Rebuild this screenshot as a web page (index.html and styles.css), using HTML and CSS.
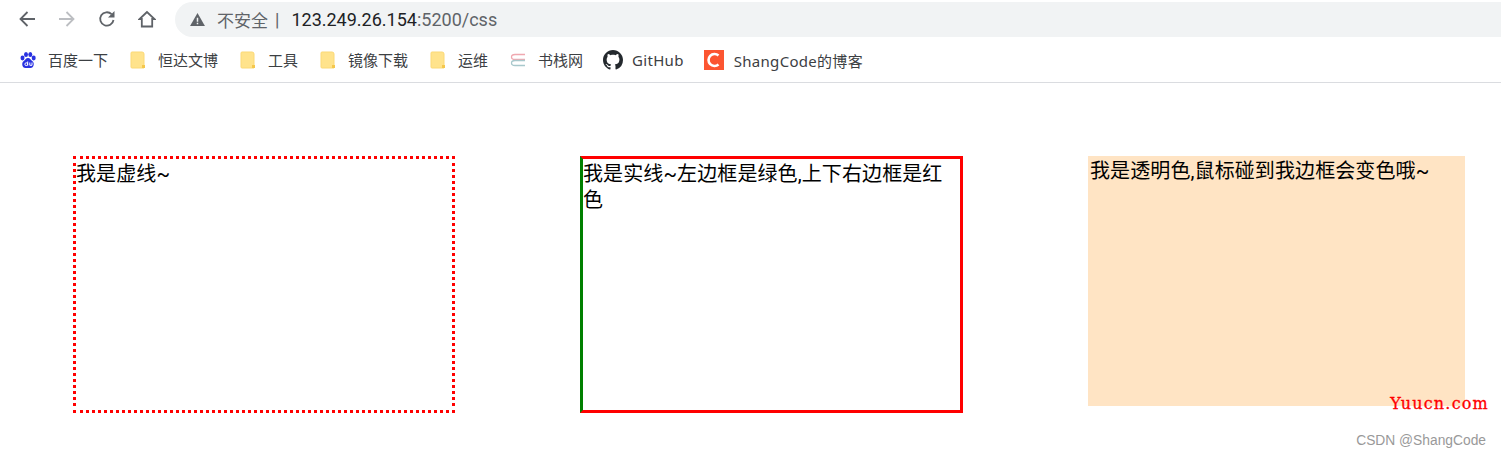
FILE: index.html
```html
<!DOCTYPE html>
<html lang="zh-CN">
<head>
<meta charset="UTF-8" />
<title>css</title>
<link rel="stylesheet" href="styles.css">
</head>
<body>

<header class="chrome">
  <div class="toolbar">
    <svg class="nav-icon" viewBox="0 0 18 18"><path d="M17 9H2.500M9.500 2L2.500 9l7 7" fill="none" stroke="#5f6368" stroke-width="1.800"/></svg>
    <svg class="nav-icon" viewBox="0 0 18 18"><path d="M1 9h14.500M8.500 2l7 7-7 7" fill="none" stroke="#bcbec2" stroke-width="1.800"/></svg>
    <svg class="nav-icon" viewBox="0 0 18 18"><path d="M15.500 10A6.700 6.700 0 1 1 13.600 4.200" fill="none" stroke="#5f6368" stroke-width="1.800"/><path d="M16.500 1v6.500H10z" fill="#5f6368"/></svg>
    <svg class="nav-icon" viewBox="0 0 18 18"><path d="M9 2L1.500 9h2.300v7.500h10.400V9h2.300z" fill="none" stroke="#5f6368" stroke-width="1.800"/></svg>
    <div class="omnibox">
      <svg class="warn" viewBox="0 0 16 14"><path d="M8 0L16 14H0z" fill="#5f6368"/><path d="M7.200 5h1.600v4.500H7.200zM7.200 10.500h1.600V12H7.200z" fill="#f1f3f4"/></svg>
      <span class="insecure">不安全</span>
      <span class="sep">|</span>
      <span class="host">123.249.26.154</span><span class="path">:5200/css</span>
    </div>
  </div>
  <nav class="bookmarks">
    <a class="bookmark">
      <svg class="bm-icon" viewBox="0 0 16 18"><g fill="#2932e1"><ellipse cx="2.500" cy="7" rx="2" ry="2.400"/><ellipse cx="6" cy="3.500" rx="2" ry="2.500"/><ellipse cx="10.300" cy="3.500" rx="2" ry="2.500"/><ellipse cx="13.700" cy="7" rx="2" ry="2.400"/><path d="M8 7c2.200 0 2.800 2.200 4.500 3.300 2.200 1.700 1.500 6.700-2 6.700h-5c-3.500 0-4.200-5-2-6.700C5.200 9.200 5.800 7 8 7z"/></g><circle cx="6.300" cy="13.200" r="1.400" fill="none" stroke="#fff"/><path d="M7.700 10.500v4M9.800 11.500v2.800h2.200v-2.800" fill="none" stroke="#fff"/></svg>
      <span>百度一下</span>
    </a>
    <a class="bookmark">
      <svg class="bm-icon" viewBox="0 0 16 18"><use href="#page"/></svg>
      <span>恒达文博</span>
    </a>
    <a class="bookmark">
      <svg class="bm-icon" viewBox="0 0 16 18"><use href="#page"/></svg>
      <span>工具</span>
    </a>
    <a class="bookmark">
      <svg class="bm-icon" viewBox="0 0 16 18"><use href="#page"/></svg>
      <span>镜像下载</span>
    </a>
    <a class="bookmark">
      <svg class="bm-icon" viewBox="0 0 16 18"><use href="#page"/></svg>
      <span>运维</span>
    </a>
    <a class="bookmark">
      <svg class="bm-icon" viewBox="0 0 16 18"><path d="M15 3.500H5Q1.500 3.500 1.500 6T5 8.500h10" fill="none" stroke="#f0a8b0" stroke-width="1.300"/><path d="M15 9.500H5Q1.500 9.500 1.500 12T5 14.500h10" fill="none" stroke="#a8c8cc" stroke-width="1.300"/></svg>
      <span>书栈网</span>
    </a>
    <a class="bookmark bookmark-tight">
      <svg class="bm-icon bm-github" viewBox="0 0 16 16"><path fill="#24292e" d="M8 0C3.580 0 0 3.580 0 8c0 3.540 2.290 6.530 5.470 7.590.4.070.55-.17.55-.38 0-.19-.01-.82-.01-1.490-2.010.37-2.530-.49-2.690-.94-.09-.23-.48-.94-.82-1.130-.28-.15-.68-.52-.01-.53.63-.01 1.080.58 1.230.82.720 1.210 1.870.87 2.330.66.070-.52.280-.87.510-1.070-1.780-.2-3.640-.89-3.640-3.950 0-.87.310-1.590.820-2.150-.08-.2-.36-1.020.08-2.120 0 0 .67-.21 2.200.82.640-.18 1.320-.27 2-.27s1.360.09 2 .27c1.530-1.040 2.200-.82 2.200-.82.440 1.100.16 1.920.08 2.120.51.560.82 1.270.82 2.150 0 3.070-1.870 3.750-3.650 3.950.29.250.54.730.54 1.480 0 1.070-.01 1.930-.01 2.200 0 .21.150.46.550.38A8.010 8.010 0 0 0 16 8c0-4.420-3.580-8-8-8z"/></svg>
      <span>GitHub</span>
    </a>
    <a class="bookmark bookmark-tight">
      <svg class="bm-icon bm-csdn" viewBox="0 0 20 20"><rect width="20" height="20" fill="#fc5531"/><path d="M14.500 5.500A6 6 0 1 0 14.500 14.500" fill="none" stroke="#fff" stroke-width="2.600"/></svg>
      <span>ShangCode的博客</span>
    </a>
  </nav>
</header>

<svg class="defs" width="0" height="0">
  <symbol id="page" viewBox="0 0 16 18">
    <path d="M2 1h10a2 2 0 0 1 2 2v14H2a1 1 0 0 1-1-1V2a1 1 0 0 1 1-1z" fill="#ffe38c" stroke="#fbd976"/>
    <path d="M12 17v-3h3v3z" fill="#f5c84c"/>
  </symbol>
</svg>

<main class="page">
  <div class="box box-dotted">我是虚线~</div>
  <div class="box box-solid">我是实线~左边框是绿色,上下右边框是红色</div>
  <div class="box box-hover">我是透明色,鼠标碰到我边框会变色哦~</div>
</main>

<div class="mark-yuucn">Yuucn.com</div>
<div class="mark-csdn">CSDN @ShangCode</div>

</body>
</html>
```

FILE: styles.css
```css
html, body {
  margin: 0;
  height: 458px;
  overflow: hidden;
}
body {
  position: relative;
  background: #fff;
  font-family: "Liberation Sans", "Noto Sans CJK SC", sans-serif;
}
.defs {
  position: absolute;
}

/* browser chrome */
.chrome {
  height: 82px;
  border-bottom: 1px solid #dadce0;
  color: #3c4043;
}
.toolbar {
  display: flex;
  align-items: center;
  height: 41px;
  padding: 0 0 3px 18px;
  box-sizing: border-box;
}
.nav-icon {
  width: 18px;
  height: 18px;
  margin-right: 22px;
}
.omnibox {
  display: flex;
  align-items: center;
  flex: 1;
  height: 35px;
  margin-left: -3px;
  padding-left: 15px;
  background: #f1f3f4;
  border-radius: 18px 0 0 18px;
  font-family: "Roboto", "Noto Sans CJK SC", sans-serif;
  font-size: 18px;
}
.warn {
  width: 15px;
  height: 13px;
  margin-right: 12px;
}
.insecure {
  color: #5f6368;
  font-size: 17px;
}
.sep {
  margin: 0 12px 0 7px;
  color: #5f6368;
}
.host {
  color: #202124;
}
.path {
  color: #5f6368;
}

.bookmarks {
  display: flex;
  align-items: center;
  height: 41px;
  padding: 0 0 3px 20px;
  box-sizing: border-box;
  font-size: 15px;
  font-family: "Noto Sans", "Noto Sans CJK SC", sans-serif;
}
.bookmark {
  display: flex;
  align-items: center;
  margin-right: 22px;
}
.bookmark span {
  margin-bottom: 2px;
}
.bookmark-tight {
  margin-left: -2px;
}
.bookmark-tight span {
  margin-bottom: 0;
  letter-spacing: 0.300px;
}
.bm-icon {
  width: 16px;
  height: 18px;
  margin-right: 12px;
}
.bm-github,
.bm-csdn {
  width: 20px;
  height: 20px;
  margin-right: 9px;
}
.bm-csdn {
  margin-right: 10px;
}

/* boxes */
.page {
  display: flex;
  align-items: flex-start;
  padding: 73px 36px 0 73px;
  gap: 124px;
  font-family: "Roboto", "Noto Sans CJK SC", sans-serif;
  font-size: 20px;
  line-height: 26px;
  letter-spacing: 0.100px;
  color: #000;
}
.box {
  width: 377px;
  height: 249px;
  padding-top: 2px;
  flex: none;
}
.box-dotted {
  width: 376px;
  border: 3px dotted #f00;
}
.box-solid {
  margin-left: 1px;
  border: 3px solid #f00;
  border-left-color: #008000;
}
.box-hover {
  background: #ffe4c4;
  margin-left: 1px;
  padding-left: 2px;
  width: 375px;
  height: 248px;
}

/* screenshot watermarks */
.mark-yuucn {
  position: absolute;
  right: 12px;
  top: 394px;
  color: #f00;
  font-family: "DejaVu Serif", serif;
  font-size: 16px;
  letter-spacing: 1.200px;
  -webkit-text-stroke: 0.300px #f00;
}
.mark-csdn {
  position: absolute;
  right: 15px;
  top: 433px;
  color: #999;
  font-family: "Liberation Sans", sans-serif;
  font-size: 13.800px;
}
```
